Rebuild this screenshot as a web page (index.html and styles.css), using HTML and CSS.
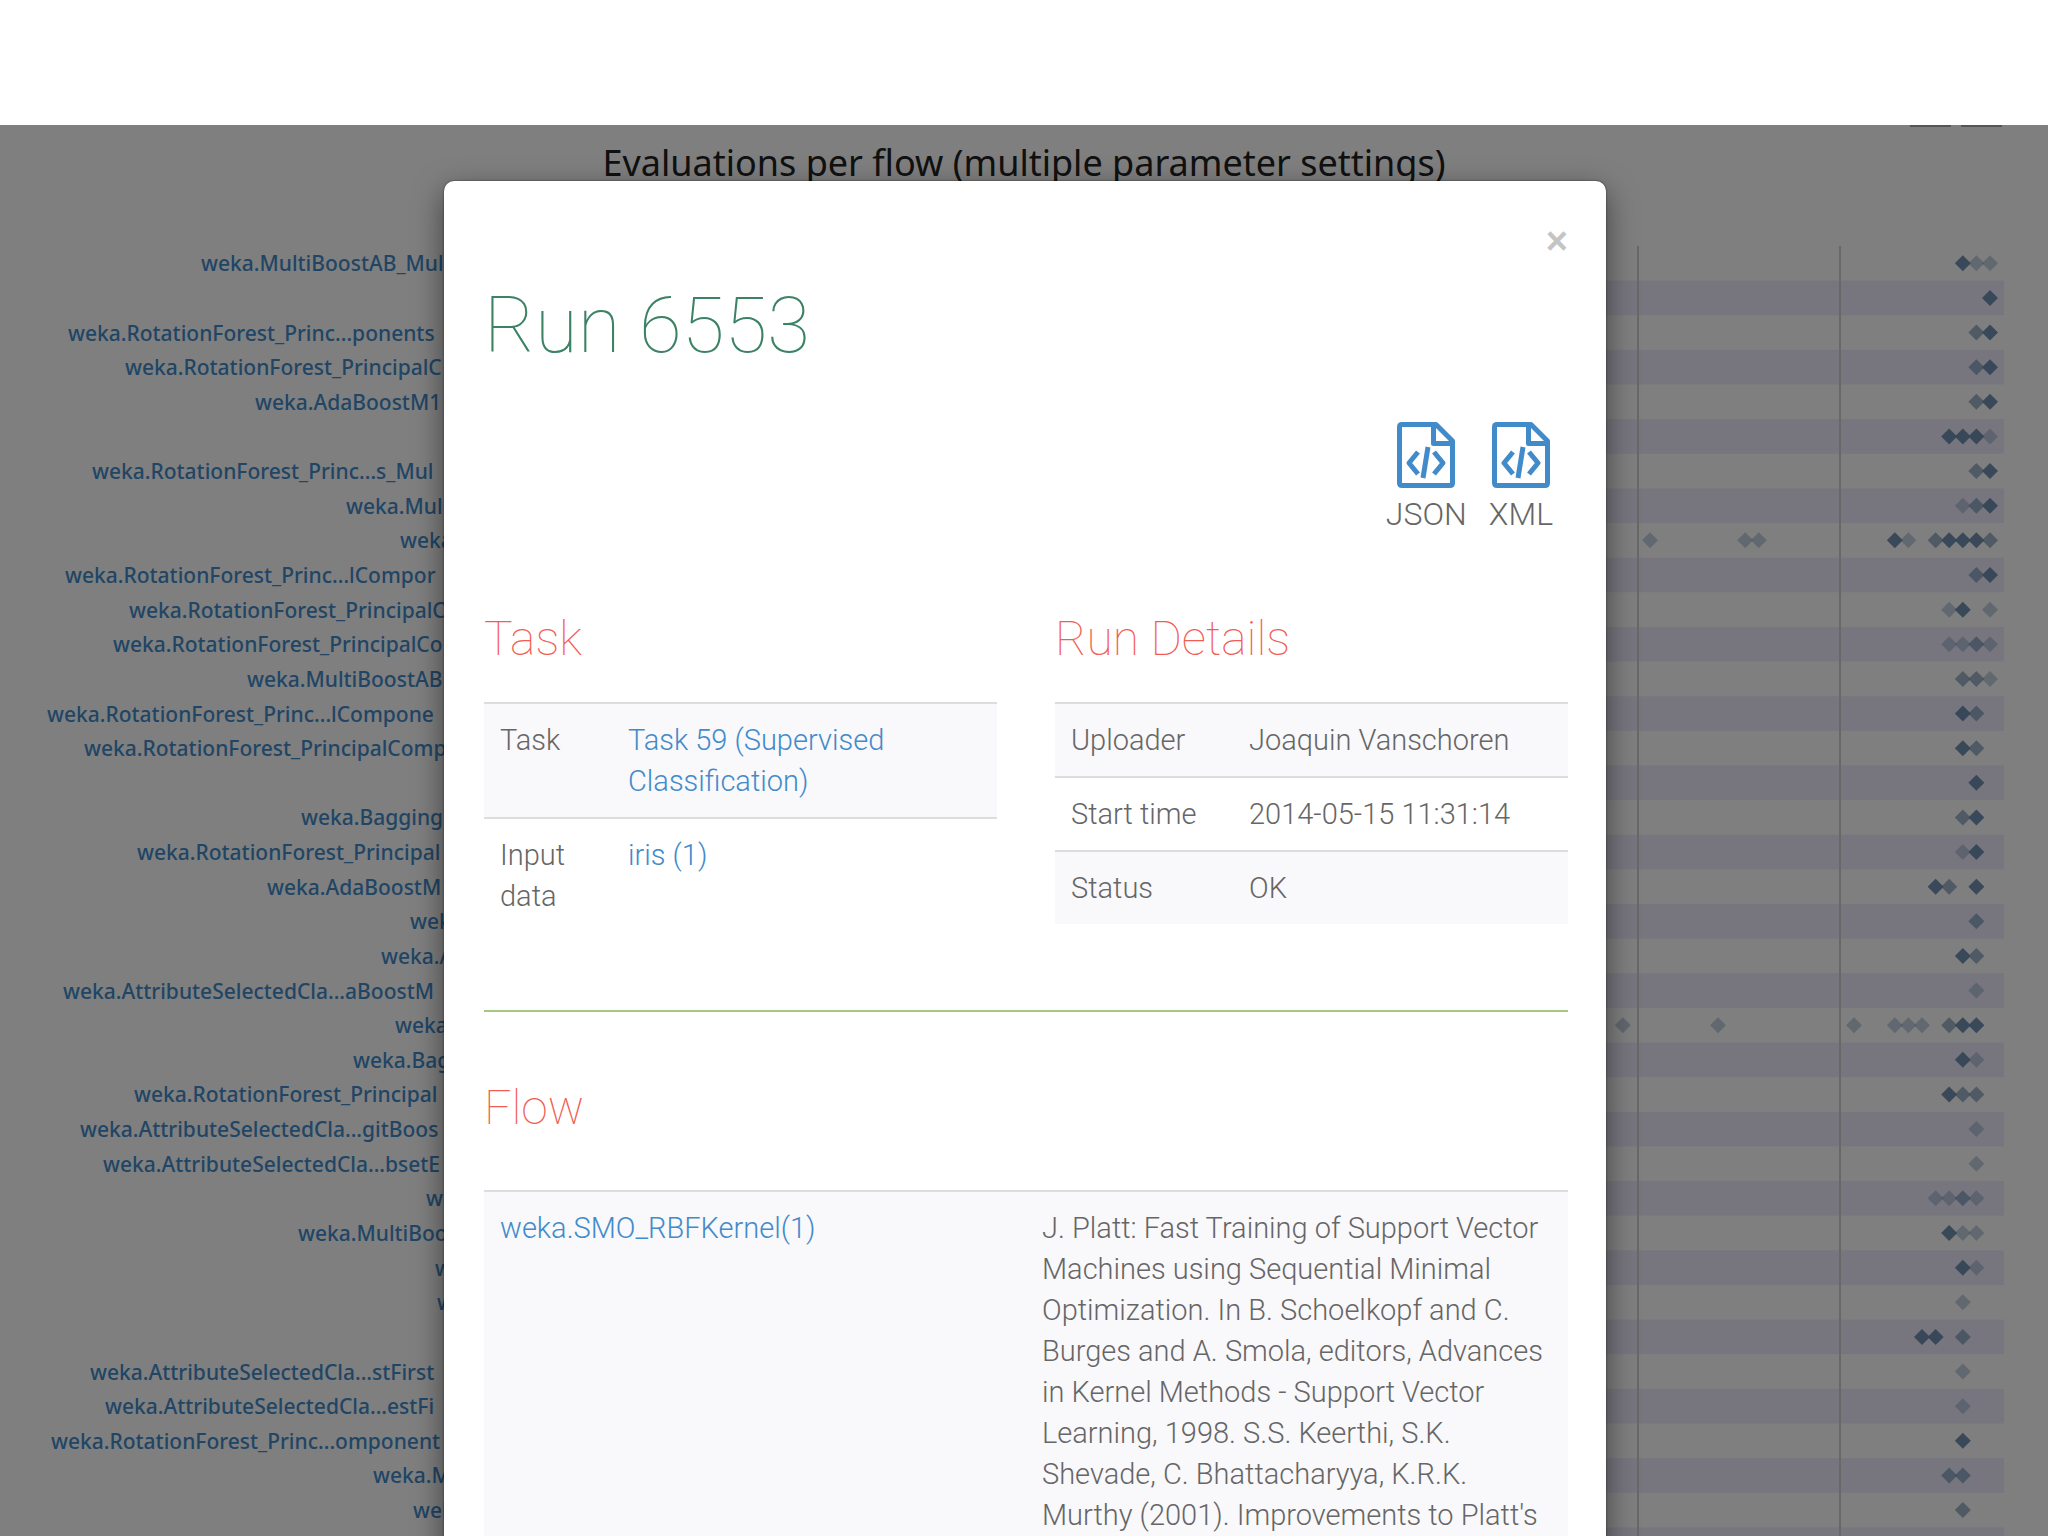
FILE: index.html
```html
<!DOCTYPE html>
<html lang="en">
<head>
  <meta charset="utf-8">
  <title>Run 6553</title>
  <link rel="stylesheet" href="styles.css">
</head>
<body>
  <header class="topbar"></header>

  <main class="page">
    <div class="toolbar">
      <span class="tool"></span>
      <span class="tool"></span>
    </div>
    <h2 class="chart-title">Evaluations per flow (multiple parameter settings)</h2>
    <svg class="chart" id="chart" width="100%" height="1316"></svg>

    <div class="backdrop">
      <div class="modal" role="dialog" aria-labelledby="runTitle">
        <div class="modal-top">
          <button type="button" class="close" aria-label="Close">&times;</button>
        </div>
        <h1 id="runTitle">Run 6553</h1>

        <div class="downloads">
          <a href="#json">
            <svg class="file-icon" viewBox="0 0 58 66" aria-hidden="true">
              <path d="M5 2.500H39L55.500 19V61Q55.500 63.500 53 63.500H5Q2.500 63.500 2.500 61V5Q2.500 2.500 5 2.500Z"/>
              <path d="M36.500 3V21.500H55"/>
              <path d="M21 30L12 41L21 52M37 30L46 41L37 52M31 25L26 56"/>
            </svg>
            <span>JSON</span>
          </a>
          <a href="#xml">
            <svg class="file-icon" viewBox="0 0 58 66" aria-hidden="true">
              <path d="M5 2.500H39L55.500 19V61Q55.500 63.500 53 63.500H5Q2.500 63.500 2.500 61V5Q2.500 2.500 5 2.500Z"/>
              <path d="M36.500 3V21.500H55"/>
              <path d="M21 30L12 41L21 52M37 30L46 41L37 52M31 25L26 56"/>
            </svg>
            <span>XML</span>
          </a>
        </div>

        <div class="columns">
          <section>
            <h3>Task</h3>
            <table class="task-table">
              <tr>
                <td>Task</td>
                <td><a href="#t59">Task 59 (Supervised Classification)</a></td>
              </tr>
              <tr>
                <td>Input data</td>
                <td><a href="#d1">iris (1)</a></td>
              </tr>
            </table>
          </section>
          <section>
            <h3>Run Details</h3>
            <table class="details-table">
              <tr>
                <td>Uploader</td>
                <td>Joaquin Vanschoren</td>
              </tr>
              <tr>
                <td>Start time</td>
                <td>2014-05-15 11:31:14</td>
              </tr>
              <tr>
                <td>Status</td>
                <td>OK</td>
              </tr>
            </table>
          </section>
        </div>

        <section class="flow">
          <h3>Flow</h3>
          <table class="flow-table">
            <tr>
              <td><a href="#f1">weka.SMO_RBFKernel(1)</a></td>
              <td>J. Platt: Fast Training of Support Vector Machines using Sequential Minimal Optimization. In B. Schoelkopf and C. Burges and A. Smola, editors, Advances in Kernel Methods - Support Vector Learning, 1998. S.S. Keerthi, S.K. Shevade, C. Bhattacharyya, K.R.K. Murthy (2001). Improvements to Platt's</td>
            </tr>
          </table>
        </section>
      </div>
    </div>
  </main>

  <script src="chart.js"></script>
</body>
</html>
```
FILE: styles.css
```css
body {
  display: flex;
  flex-direction: column;
  height: 100vh;
  margin: 0;
  overflow: hidden;
  background-color: #fff;
  color: #666;
  font-family: Roboto, "Liberation Sans", sans-serif;
  font-size: 29px;
  font-weight: 300;
  line-height: 41px;
}

a {
  color: #428bca;
  text-decoration: none;
}

.topbar {
  flex: 0 0 125px;
}

.page {
  position: relative;
  flex: 1;
  overflow: hidden;
}

/* chart behind the dialog */
.toolbar {
  display: flex;
  justify-content: flex-end;
  gap: 10px;
  height: 2px;
  padding-right: 46px;
}

.tool {
  width: 41px;
  background-color: #aaa;
}

.chart-title {
  margin: 14px 0 61px;
  color: #222;
  font-family: "Noto Sans", "Open Sans", sans-serif;
  font-size: 36px;
  font-weight: 400;
  line-height: 44px;
  text-align: center;
}

.chart {
  display: block;
}

.chart text {
  fill: #428bca;
  font-family: "Noto Sans", "Open Sans", sans-serif;
  font-size: 21px;
  font-weight: 500;
}

.band {
  fill: #eeedff;
}

.gridline {
  stroke: #d0d0d0;
  stroke-width: 2;
}

.point {
  fill: #6c8cae;
}

/* dialog */
.backdrop {
  position: absolute;
  inset: 0;
  padding-left: 2px;
  background-color: rgba(0, 0, 0, 0.5);
}

.modal {
  box-sizing: border-box;
  max-width: 1162px;
  min-height: 100%;
  margin: 56px auto 0;
  padding: 40px 38px 40px 40px;
  background-color: #fff;
  border-radius: 10px;
  box-shadow: 0 0 2px rgba(0, 0, 0, 0.6), 0 10px 30px rgba(0, 0, 0, 0.5);
}

.modal-top {
  display: flex;
  justify-content: flex-end;
}

.close {
  padding: 0;
  border: none;
  background: none;
  color: #c4c4c4;
  font-family: "Liberation Sans", sans-serif;
  font-size: 38px;
  font-weight: 700;
  line-height: 41px;
  cursor: pointer;
}

h1 {
  margin: 20px 0 0;
  color: #3c8264;
  font-size: 78px;
  font-weight: 100;
  line-height: 88px;
}

.downloads {
  display: flex;
  justify-content: flex-end;
  gap: 22px;
  margin-top: 52px;
  padding-right: 15px;
}

.downloads a {
  display: flex;
  flex-direction: column;
  align-items: center;
  gap: 6px;
  color: #666;
  font-size: 32px;
}

.file-icon {
  width: 58px;
  height: 66px;
  fill: none;
  stroke: #428bca;
  stroke-width: 5;
  stroke-linejoin: round;
}

.columns {
  display: grid;
  grid-template-columns: 1fr 1fr;
  gap: 58px;
  padding-bottom: 78px;
  border-bottom: 2px solid #a5c882;
}

h3 {
  margin: 75px 0 34px;
  color: #f25c54;
  font-size: 48px;
  font-weight: 100;
  line-height: 58px;
}

.flow h3 {
  margin: 67px 0 53px;
}

table {
  width: 100%;
  border-collapse: collapse;
  table-layout: fixed;
}

td {
  padding: 16px 16px 15px;
  border-top: 2px solid #ddd;
  vertical-align: top;
}

tr:nth-child(odd) td {
  background-color: #f9f8fb;
}

.task-table td:first-child {
  width: 96px;
}

.details-table td:first-child {
  width: 146px;
}
```
FILE: chart.js
```js
const SVG = 'http://www.w3.org/2000/svg';
const ROW = 1316 / 38;
const STEP = 13.6;
const shades = { d: 0.95, m: 0.65, l: 0.4 };

// [label, label start, points as "steps from the right edge + shade"]
const rows = [
  ['weka.MultiBoostAB_Mul', 201, '2d 1l 0l'],
  ['', 0, '0d'],
  ['weka.RotationForest_Princ...ponents', 68, '1m 0d'],
  ['weka.RotationForest_PrincipalC', 125, '1m 0d'],
  ['weka.AdaBoostM1', 255, '1m 0d'],
  ['', 0, '3d 2d 1d 0l'],
  ['weka.RotationForest_Princ...s_Mul', 92, '1m 0d'],
  ['weka.Mul', 346, '2l 1m 0d'],
  ['weka', 400, '25l 18l 17l 7d 6l 4m 3d 2d 1d 0m'],
  ['weka.RotationForest_Princ...lCompor', 65, '1m 0d'],
  ['weka.RotationForest_PrincipalC', 129, '3l 2d 0l'],
  ['weka.RotationForest_PrincipalCo', 113, '3l 2l 1m 0l'],
  ['weka.MultiBoostAB', 247, '2m 1m 0l'],
  ['weka.RotationForest_Princ...lCompone', 47, '2d 1m'],
  ['weka.RotationForest_PrincipalComp', 84, '2d 1m'],
  ['', 0, '1d'],
  ['weka.Bagging', 301, '2m 1d'],
  ['weka.RotationForest_Principal', 137, '2l 1d'],
  ['weka.AdaBoostM', 267, '4d 3m 1d'],
  ['wek', 410, '1m'],
  ['weka.A', 381, '2d 1m'],
  ['weka.AttributeSelectedCla...aBoostM', 63, '1l'],
  ['weka', 395, '27l 20l 10l 7l 6l 5l 3m 2d 1d'],
  ['weka.Bag', 353, '2d 1l'],
  ['weka.RotationForest_Principal', 134, '3d 2m 1m'],
  ['weka.AttributeSelectedCla...gitBoos', 80, '1l'],
  ['weka.AttributeSelectedCla...bsetE', 103, '1l'],
  ['we', 426, '4l 3l 2m 1l'],
  ['weka.MultiBoo', 298, '3d 2l 1l'],
  ['w', 435, '2d 1l'],
  ['w', 437, '2l'],
  ['', 0, '5d 4d 2m'],
  ['weka.AttributeSelectedCla...stFirst', 90, '2l'],
  ['weka.AttributeSelectedCla...estFi', 105, '2l'],
  ['weka.RotationForest_Princ...omponent', 51, '2d'],
  ['weka.M', 373, '3m 2m'],
  ['wek', 413, '2m'],
  ['', 0, '']
];

const chart = document.getElementById('chart');
const right = chart.clientWidth - 44;

function add(name, attrs, text) {
  const el = document.createElementNS(SVG, name);
  for (const key in attrs) el.setAttribute(key, attrs[key]);
  if (text) el.textContent = text;
  chart.appendChild(el);
}

rows.forEach(function(row, i) {
  if (i % 2) {
    add('rect', { class: 'band', x: 460, y: i * ROW, width: right - 460, height: ROW });
  }
});

[366, 164].forEach(function(x) {
  add('line', { class: 'gridline', x1: right - x, x2: right - x, y1: 0, y2: 1316 });
});

rows.forEach(function(row, i) {
  const y = (i + 0.5) * ROW;
  if (row[0]) add('text', { x: row[1], y: y + 8 }, row[0]);
  row[2].split(' ').filter(Boolean).forEach(function(p) {
    const x = right - 14 - parseInt(p) * STEP;
    add('path', {
      class: 'point',
      opacity: shades[p.slice(-1)],
      d: `M${x - 8} ${y}L${x} ${y - 8}L${x + 8} ${y}L${x} ${y + 8}Z`
    });
  });
});
```
